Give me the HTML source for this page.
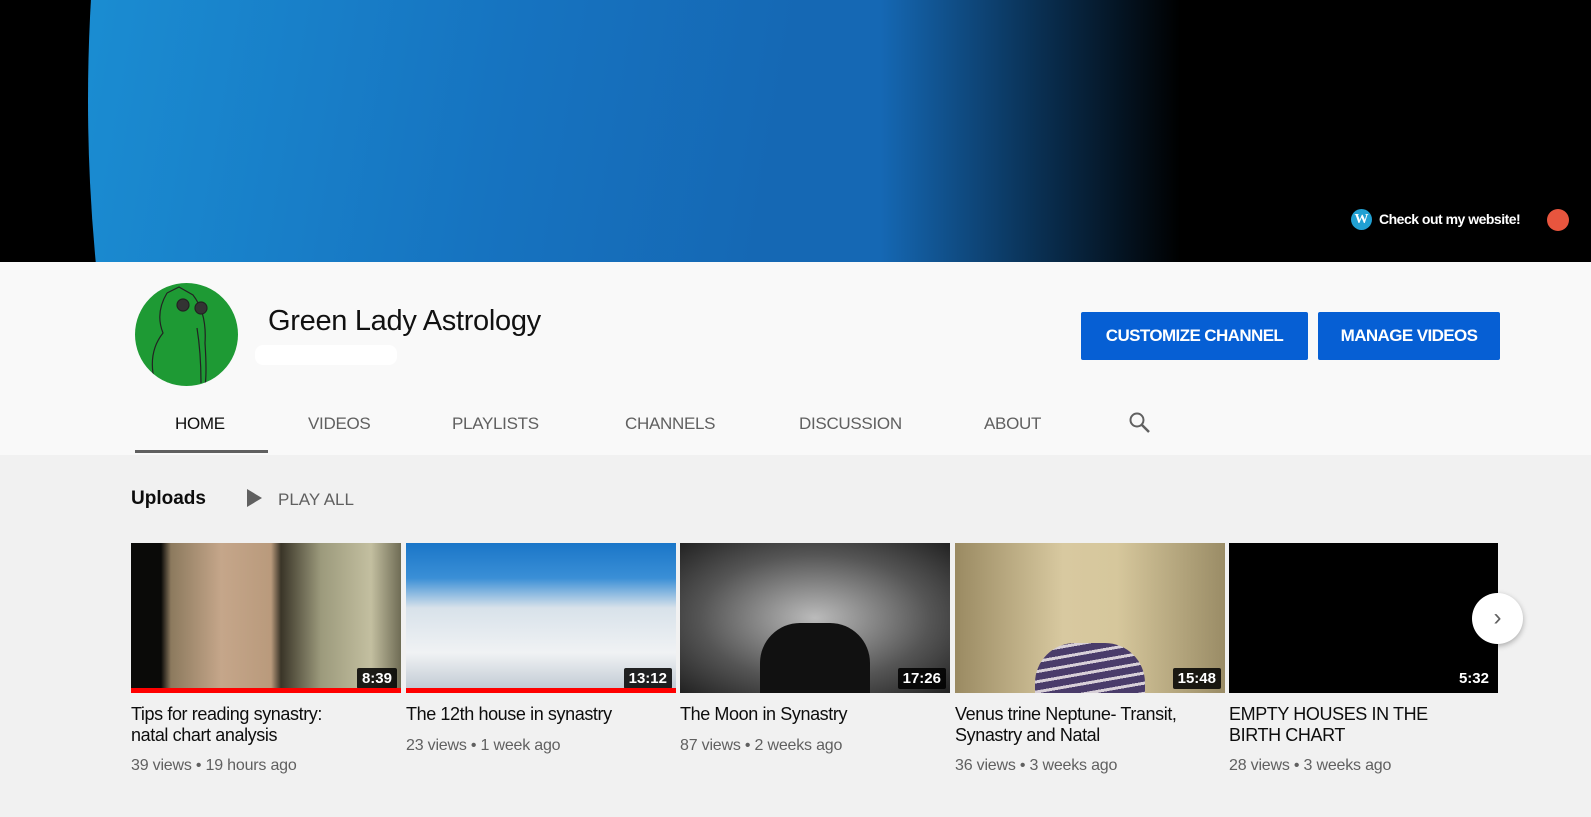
<!DOCTYPE html>
<html><head><style>
*{margin:0;padding:0;box-sizing:border-box}
html,body{width:1591px;height:817px;overflow:hidden}
body{background:#f1f1f1;font-family:"Liberation Sans",Arial,sans-serif;position:relative}
.banner{position:absolute;left:0;top:0;width:1591px;height:262px;background:#000;overflow:hidden}
.planet{position:absolute;left:88px;top:-1600px;width:3400px;height:3400px;border-radius:50%;
background:linear-gradient(100deg,#1aa2de 0%,#1a8ad0 8%,#1673c0 18%,#1568b4 25%)}
.shade{position:absolute;left:0;top:0;width:1591px;height:262px;background:linear-gradient(90deg,rgba(0,0,0,0) 0,rgba(0,0,0,0) 880px,rgba(0,0,0,.55) 1040px,#000 1180px)}
.hdr{position:absolute;left:0;top:262px;width:1591px;height:193px;background:#f9f9f9}
.abs{position:absolute}
.btn{position:absolute;top:312px;height:48px;background:#065fd4;color:#fff;font-size:17px;font-weight:bold;display:flex;align-items:center;justify-content:center;border-radius:2px;letter-spacing:-.6px}
.tab{position:absolute;top:414px;font-size:17px;color:#606060;letter-spacing:-.3px}
.th{position:absolute;top:543px;width:270px;height:150px;overflow:hidden}
.dur{position:absolute;right:4px;bottom:4px;background:rgba(0,0,0,.85);color:#fff;font-weight:bold;font-size:15px;padding:2px 5px;border-radius:2px}
.red{position:absolute;left:0;bottom:0;width:100%;height:5px;background:#f00}
.title{position:absolute;top:704px;font-size:18px;color:#0d0d0d;line-height:21px;width:230px;letter-spacing:-.4px}
.meta{position:absolute;font-size:16px;color:#606060;letter-spacing:-.2px}
</style></head><body>
<div class="banner"><div class="planet"></div><div class="shade"></div>
<div class="abs" style="left:1351px;top:209px;width:21px;height:21px;border-radius:50%;background:#21a0d2;color:#fff;font-size:14px;font-weight:bold;text-align:center;line-height:21px;font-family:'Liberation Serif',serif">W</div>
<div class="abs" style="left:1379px;top:211px;color:#fff;font-size:14px;font-weight:bold;letter-spacing:-.5px">Check out my website!</div>
<div class="abs" style="left:1547px;top:209px;width:22px;height:22px;border-radius:50%;background:#e8553e"></div>
</div>
<div class="hdr"></div>
<div class="abs" style="left:135px;top:283px;width:103px;height:103px;border-radius:50%;background:#1e9a34;overflow:hidden">
<svg width="103" height="103"><g fill="none" stroke="#222" stroke-width="1.2"><path d="M32 10 L44 4 L58 12 Q72 30 70 60 Q72 90 70 103 M32 10 Q20 30 28 50 Q12 70 20 100"/><circle cx="48" cy="22" r="6" fill="#333"/><circle cx="66" cy="25" r="6" fill="#333"/><path d="M62 45 Q66 70 66 100"/></g></svg></div>
<div class="abs" style="left:268px;top:305px;font-size:29px;color:#111;letter-spacing:-.3px">Green Lady Astrology</div>
<div class="abs" style="left:255px;top:345px;width:142px;height:20px;background:#fff;border-radius:8px"></div>
<div class="btn" style="left:1081px;width:227px">CUSTOMIZE CHANNEL</div>
<div class="btn" style="left:1318px;width:182px">MANAGE VIDEOS</div>
<div class="tab" style="left:175px;color:#0d0d0d">HOME</div>
<div class="abs" style="left:135px;top:450px;width:133px;height:3px;background:#606060"></div>
<div class="tab" style="left:308px">VIDEOS</div>
<div class="tab" style="left:452px">PLAYLISTS</div>
<div class="tab" style="left:625px">CHANNELS</div>
<div class="tab" style="left:799px">DISCUSSION</div>
<div class="tab" style="left:984px">ABOUT</div>
<svg class="abs" style="left:1128px;top:411px" width="24" height="24"><circle cx="9" cy="9" r="6.5" fill="none" stroke="#606060" stroke-width="2"/><path d="M14 14 L21 21" stroke="#606060" stroke-width="2.5"/></svg>
<div class="abs" style="left:131px;top:488px;font-size:19px;font-weight:bold;color:#0d0d0d">Uploads</div>
<svg class="abs" style="left:247px;top:489px" width="16" height="18"><path d="M0 0 L15 9 L0 18Z" fill="#606060"/></svg>
<div class="abs" style="left:278px;top:490px;font-size:17px;color:#606060">PLAY ALL</div>

<div class="th" style="left:131px;background:linear-gradient(90deg,#0a0a08 0,#0a0a08 30px,#8c7a5e 40px,#c5a68a 90px,#b99a7c 140px,#3a3528 150px,#9c9a7c 190px,#c3bfa0 240px,#6f6c55 270px)"><div class="dur">8:39</div><div class="red"></div></div>
<div class="th" style="left:406px;background:linear-gradient(180deg,#1a76c8 0,#3a8fd6 35px,#d8e2ea 65px,#f0f2f4 110px,#bcc6d0 150px)"><div class="dur">13:12</div><div class="red"></div></div>
<div class="th" style="left:680px;background:radial-gradient(ellipse at 50% 50%,#bbb 0,#888 30%,#555 60%,#222 100%)"><div class="abs" style="left:80px;top:80px;width:110px;height:70px;background:#111;border-radius:40px 40px 0 0"></div><div class="dur">17:26</div></div>
<div class="th" style="left:955px;background:linear-gradient(90deg,#9a8a62,#d8c9a0 40%,#d6c79c 60%,#9a8c66)"><div class="abs" style="left:80px;top:100px;width:110px;height:50px;background:repeating-linear-gradient(170deg,#4a3c6a 0 7px,#d8d0d8 7px 10px);border-radius:40px 40px 0 0"></div><div class="dur">15:48</div></div>
<div class="th" style="left:1229px;width:269px;background:#000"><div class="dur">5:32</div></div>
<div class="abs" style="left:1472px;top:593px;width:51px;height:51px;border-radius:50%;background:#fff;box-shadow:0 2px 6px rgba(0,0,0,.3);color:#606060;font-size:24px;text-align:center;line-height:49px">&#8250;</div>

<div class="title" style="left:131px;width:215px">Tips for reading synastry: natal chart analysis</div>
<div class="meta" style="left:131px;top:757px">39 views • 19 hours ago</div>
<div class="title" style="left:406px">The 12th house in synastry</div>
<div class="meta" style="left:406px;top:737px">23 views • 1 week ago</div>
<div class="title" style="left:680px">The Moon in Synastry</div>
<div class="meta" style="left:680px;top:737px">87 views • 2 weeks ago</div>
<div class="title" style="left:955px">Venus trine Neptune- Transit, Synastry and Natal</div>
<div class="meta" style="left:955px;top:757px">36 views • 3 weeks ago</div>
<div class="title" style="left:1229px">EMPTY HOUSES IN THE BIRTH CHART</div>
<div class="meta" style="left:1229px;top:757px">28 views • 3 weeks ago</div>
</body></html>
